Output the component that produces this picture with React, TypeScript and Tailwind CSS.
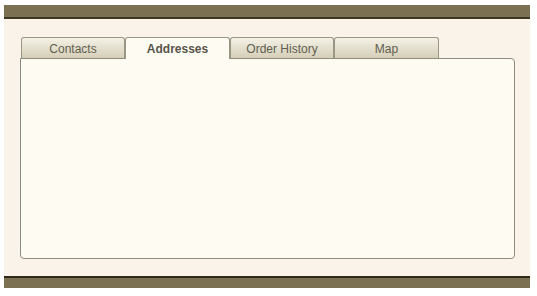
const tabs = [
  { label: "Contacts", w: "w-[104px]" },
  { label: "Addresses", w: "w-[105px]" },
  { label: "Order History", w: "w-[104px]" },
  { label: "Map", w: "w-[105px]" },
];

export default function App() {
  const active = 1;
  return (
    <div className="h-[296px] w-[537px] bg-white pl-1 pt-[5px] font-['Liberation_Sans',Arial,sans-serif]">
      <div className="flex h-[283px] w-[526px] flex-col bg-[#f9f3ea]">
        <div className="h-[14px] border-b-2 border-[#3f3624] bg-[#7b7052]" />
        <div className="flex flex-1 flex-col px-4 pt-[18px]">
          <div className="flex pl-[1px]">
            {tabs.map((t, i) =>
              i === active ? (
                <div
                  key={t.label}
                  className={`relative z-10 -mb-px flex h-[22px] ${t.w} items-center justify-center rounded-t-[3px] border border-b-0 border-[#9a9686] bg-[#fefcf2] pt-[1px] text-[12px] font-bold text-[#57534a]`}
                >
                  {t.label}
                </div>
              ) : (
                <div
                  key={t.label}
                  className={`flex h-[21px] ${t.w} items-center justify-center rounded-t-[3px] border border-b-0 border-[#9a9686] bg-gradient-to-b from-[#f4f1e6] to-[#d5cfb8] pt-[1px] text-[12px] text-[#625e4f]`}
                >
                  {t.label}
                </div>
              )
            )}
          </div>
          <div className="h-[201px] w-[495px] rounded-b-[4px] rounded-tr-[4px] border border-[#8e8b80] bg-[#fefcf2]" />
        </div>
        <div className="h-[12px] border-t-2 border-[#2f2818] bg-[#7b7052]" />
      </div>
    </div>
  );
}
